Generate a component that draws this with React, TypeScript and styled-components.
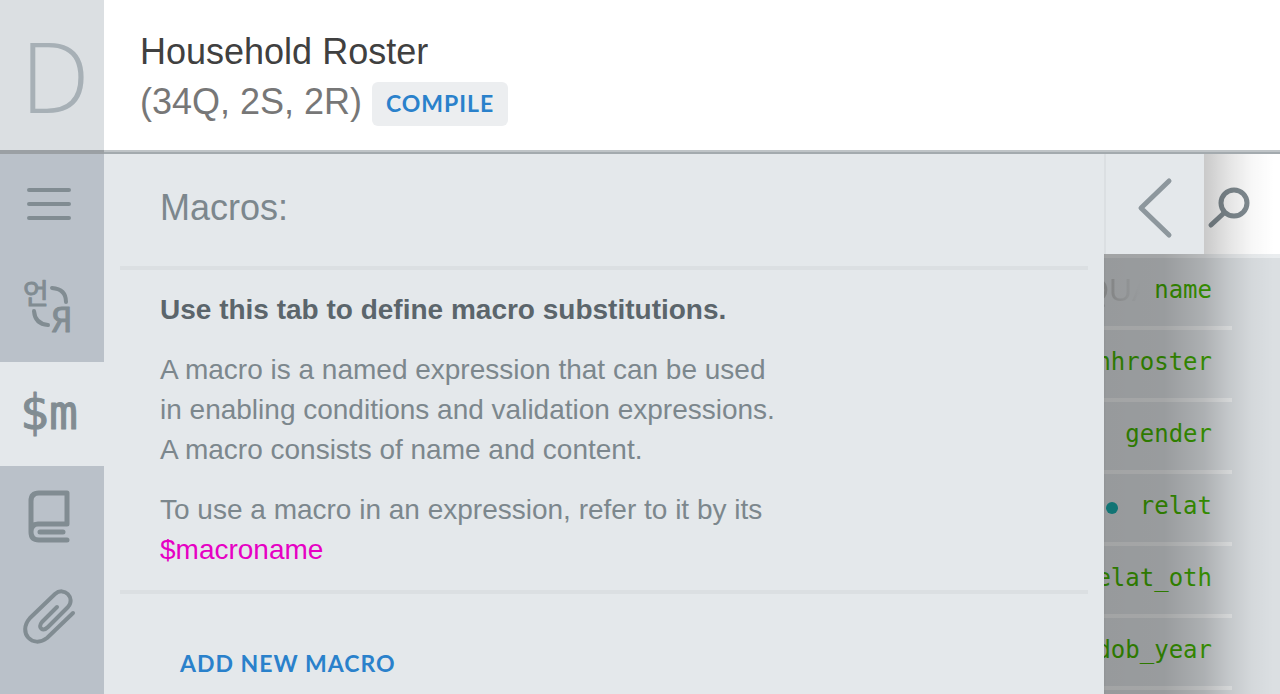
import React from "react";
import styled, { createGlobalStyle } from "styled-components";

const GlobalStyle = createGlobalStyle`
  *, *::before, *::after { box-sizing: border-box; }
  body { margin: 0; font-family: "Liberation Sans", Arial, sans-serif; background: #e4e8eb; }
  h1, h2, p, ul { margin: 0; padding: 0; }
  ul { list-style: none; }
  button { border: 0; padding: 0; margin: 0; cursor: pointer; }
`;

const Page = styled.div`
  display: flex;
  flex-direction: column;
  min-height: 100vh;
  overflow: hidden;
`;

const Header = styled.header`
  display: flex;
  background: #fff;
`;

const Logo = styled.a`
  display: flex;
  align-items: center;
  justify-content: center;
  flex: none;
  width: 104px;
  padding-left: 6px;
  background: #dbdfe2;
  border-bottom: 4px solid #9ba0a4;
  color: #a7b0b6;
  font-family: "Open Sans", sans-serif;
  font-size: 98px;
  font-weight: 300;
  line-height: 150px;
  text-decoration: none;
`;

const Heading = styled.div`
  flex: 1;
  padding: 26px 36px 22px;
  border-bottom: 2px solid #a3aaae;
  box-shadow: inset 0 -2px #bfc4c7;
`;

const Title = styled.h1`
  color: #404040;
  font-size: 36px;
  font-weight: 400;
  line-height: 52px;
`;

const Stats = styled.div`
  display: flex;
  align-items: center;
  gap: 10px;
  height: 52px;
`;

const Counts = styled.span`
  padding-bottom: 4px;
  color: #777;
  font-size: 36px;
  line-height: 48px;
`;

const ActionButton = styled.button<{ $filled?: boolean }>`
  min-width: 136px;
  height: 44px;
  padding: 0 12px 3px;
  border-radius: 6px;
  background: ${(p) => (p.$filled ? "#eceef0" : "transparent")};
  color: #2a81cb;
  font-family: Lato, sans-serif;
  font-size: 23px;
  font-weight: 700;
  letter-spacing: 1px;
  text-transform: uppercase;
`;

const Body = styled.div`
  display: flex;
  flex: 1;
`;

const Nav = styled.nav`
  flex: none;
  width: 104px;
  background: #bac1c9;
`;

const NavButton = styled.button<{ $active?: boolean }>`
  display: flex;
  align-items: center;
  justify-content: center;
  width: 100%;
  height: 104px;
  padding: 0 6px 4px 0;
  background: ${(p) => (p.$active ? "#e4e8eb" : "transparent")};
  color: #818c92;
`;

const Icon = styled.svg<{ $bold?: boolean }>`
  display: block;
  fill: none;
  stroke: currentColor;
  stroke-width: ${(p) => (p.$bold ? 5 : 4)}px;
  stroke-linecap: round;
  stroke-linejoin: round;
  overflow: visible;

  text {
    fill: currentColor;
    stroke-width: 1px;
    font-family: "DejaVu Sans Mono", "Noto Sans CJK KR", monospace;
  }
`;

const Panel = styled.main`
  flex: 1;
  min-width: 0;
  padding: 0 16px;
  background: #e4e8eb;
`;

const PanelTitle = styled.h2`
  padding: 28px 40px 32px;
  border-bottom: 4px solid #dbdfe2;
  color: #7c878d;
  font-size: 36px;
  font-weight: 400;
  line-height: 52px;
`;

const Help = styled.section`
  display: flex;
  flex-direction: column;
  gap: 20px;
  padding: 20px 40px;
  border-bottom: 4px solid #dbdfe2;
  color: #7c878d;
  font-size: 28px;
  line-height: 40px;
`;

const Lead = styled.p`
  color: #5b656b;
  font-weight: 700;
`;

const Text = styled.p`
  max-width: 628px;
`;

const MacroName = styled.span`
  display: block;
  color: #e600c4;
`;

const PanelFooter = styled.div`
  padding: 48px 48px 0;
`;

const Side = styled.aside`
  position: relative;
  display: flex;
  flex-direction: column;
  flex: none;
  width: 176px;
  background: #dbdfe2;
`;

const SideBar = styled.div`
  display: flex;
  height: 100px;
  background: #fff;
`;

const BackButton = styled.button`
  position: relative;
  z-index: 2;
  display: flex;
  align-items: center;
  justify-content: center;
  width: 100px;
  padding-top: 8px;
  background: #e4e8eb;
  border-left: 2px solid #dbdfe2;
  color: #8d979d;
`;

const SearchButton = styled.button`
  display: flex;
  align-items: center;
  flex: 1;
  padding: 8px 0 0 4px;
  background: transparent;
  color: #818c92;
`;

const Shade = styled.div`
  position: absolute;
  inset: 0;
  z-index: 1;
  pointer-events: none;
  background: linear-gradient(
    to right,
    rgba(0, 0, 0, 0.34) 0,
    rgba(0, 0, 0, 0.31) 2px,
    rgba(0, 0, 0, 0.3) 60px,
    rgba(0, 0, 0, 0.21) 100px,
    rgba(0, 0, 0, 0.1) 126px,
    rgba(0, 0, 0, 0.03) 148px,
    rgba(0, 0, 0, 0) 170px
  );
`;

const Questions = styled.ul`
  flex: 1;
  overflow: hidden;
  border-top: 4px solid #eaedef;
`;

const Question = styled.li`
  display: flex;
  align-items: center;
  justify-content: flex-end;
  height: 72px;
  margin-right: 48px;
  padding: 0 20px 4px 0;
  overflow: hidden;
  border-bottom: 4px solid #eceeef;
`;

const Variable = styled.span`
  flex: none;
  color: #41ae00;
  font-family: "DejaVu Sans Mono", monospace;
  font-size: 24px;
  line-height: 32px;
`;

const Dot = styled.span`
  flex: none;
  width: 12px;
  height: 12px;
  margin: 4px 22px 0 0;
  border-radius: 50%;
  background: #18a8a8;
`;

const Label = styled.span`
  width: 56px;
  margin: 0 auto 0 -20px;
  color: transparent;
  background: linear-gradient(to right, #bcbebf 24px, #d9dde0 54px);
  background-clip: text;
  font-size: 32px;
  line-height: 36px;
`;

const questions = [
  { name: "name", label: "QUA" },
  { name: "nhroster" },
  { name: "gender" },
  { name: "relat", dot: true },
  { name: "relat_oth" },
  { name: "dob_year" },
];

export default function App() {
  return (
    <Page>
      <GlobalStyle />
      <Header>
        <Logo href="#">D</Logo>
        <Heading>
          <Title>Household Roster</Title>
          <Stats>
            <Counts>(34Q, 2S, 2R)</Counts>
            <ActionButton type="button" $filled>Compile</ActionButton>
          </Stats>
        </Heading>
      </Header>
      <Body>
        <Nav>
          <NavButton type="button" aria-label="Chapters">
            <Icon width="46" height="34" viewBox="0 0 46 34">
              <path d="M3 3H43M3 17H43M3 31H43" />
            </Icon>
          </NavButton>
          <NavButton type="button" aria-label="Translations">
            <Icon width="50" height="56" viewBox="0 0 50 56">
              <text x="-1" y="24" fontSize="28" fontWeight="400">언</text>
              <text x="27" y="52" fontSize="33">Я</text>
              <path d="M28 8Q42 9 42 22M10 31Q11 44 24 45" />
            </Icon>
          </NavButton>
          <NavButton type="button" aria-label="Macros" $active>
            <Icon width="58" height="56" viewBox="0 0 58 56">
              <text x="0" y="45" fontSize="48">$m</text>
            </Icon>
          </NavButton>
          <NavButton type="button" aria-label="Lookup tables">
            <Icon $bold width="42" height="52" viewBox="0 0 42 52">
              <path d="M39 34H10Q3 34 3 42Q3 50 11 50H39M3 42V11Q3 3 11 3H39V34M12 42H35" />
            </Icon>
          </NavButton>
          <NavButton type="button" aria-label="Attachments">
            <Icon width="52" height="56" viewBox="0 3 52 56">
              <path d="M34 18L19 33C14 39 20 43 25 38L45 18C53 9 41-3 32 5L7 29C-6 44 10 60 24 49L50 24" />
            </Icon>
          </NavButton>
        </Nav>
        <Panel>
          <PanelTitle>Macros:</PanelTitle>
          <Help>
            <Lead>Use this tab to define macro substitutions.</Lead>
            <Text>
              A macro is a named expression that can be used in enabling conditions and validation
              expressions. A macro consists of name and content.
            </Text>
            <Text>
              To use a macro in an expression, refer to it by its <MacroName>$macroname</MacroName>
            </Text>
          </Help>
          <PanelFooter>
            <ActionButton type="button">Add new macro</ActionButton>
          </PanelFooter>
        </Panel>
        <Side>
          <SideBar>
            <BackButton type="button" aria-label="Close panel">
              <Icon $bold width="34" height="60" viewBox="0 0 34 60">
                <path d="M31 3L3 30L31 57" />
              </Icon>
            </BackButton>
            <SearchButton type="button" aria-label="Search">
              <Icon $bold width="44" height="44" viewBox="0 0 44 44">
                <circle cx="26" cy="17" r="13" />
                <path d="M16 27L3 39" />
              </Icon>
            </SearchButton>
          </SideBar>
          <Questions>
            {questions.map((q) => (
              <Question key={q.name}>
                {q.label && <Label>{q.label}</Label>}
                {q.dot && <Dot />}
                <Variable>{q.name}</Variable>
              </Question>
            ))}
          </Questions>
          <Shade />
        </Side>
      </Body>
    </Page>
  );
}
